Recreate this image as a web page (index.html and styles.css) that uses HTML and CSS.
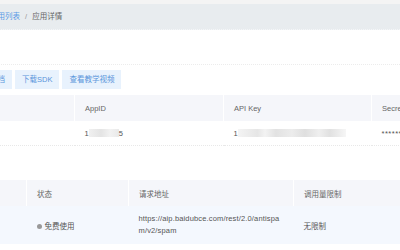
FILE: index.html
```html
<!DOCTYPE html>
<html>
<head>
  <title>应用详情</title>
  <link rel="stylesheet" href="styles.css">
</head>
<body>
  <div class="top-strip"></div>
  <div class="page">
    <div class="crumb">
      <a class="crumb-link" href="#">应用列表</a>
      <span class="crumb-sep">/</span>
      <span class="crumb-current">应用详情</span>
    </div>

    <div class="blank"></div>

    <div class="actions">
      <a class="btn" href="#">技术文档</a>
      <a class="btn" href="#">下载SDK</a>
      <a class="btn" href="#">查看教学视频</a>
    </div>

    <table class="grid keys">
      <tr>
        <th class="c1">应用名称</th>
        <th class="c2">AppID</th>
        <th class="c3">API Key</th>
        <th class="c4">Secret Key</th>
      </tr>
      <tr>
        <td>内容审核</td>
        <td>1<span class="mask mask-short"></span>5</td>
        <td>1<span class="mask mask-long"></span></td>
        <td class="secret">******</td>
      </tr>
    </table>

    <table class="grid apis">
      <tr>
        <th class="d1">API</th>
        <th class="d2">状态</th>
        <th class="d3">请求地址</th>
        <th class="d4">调用量限制</th>
      </tr>
      <tr class="hover">
        <td>反垃圾</td>
        <td class="status"><span class="dot"></span>免费使用</td>
        <td class="url">https://aip.baidubce.com/rest/2.0/antispam/v2/spam</td>
        <td>无限制</td>
      </tr>
    </table>
  </div>
</body>
</html>
```

FILE: styles.css
```css
body {
  margin: 0;
  font-family: "Liberation Sans", "Noto Sans CJK SC", sans-serif;
  font-size: 7.5px;
  color: #333;
  background-color: #fff;
  overflow: hidden;
}

.top-strip {
  height: 4px;
  background-color: #f4f4f4;
}

.page {
  margin-left: -60px;
  width: 700px;
}

.crumb {
  height: 25px;
  line-height: 25px;
  padding-left: 50px;
  background-color: #e8ecef;
  border-bottom: 1px dotted #f4f6f8;
  color: #666;
}

.crumb-link {
  color: #5b9be6;
  text-decoration: none;
}

.crumb-sep {
  margin: 0 3px;
  color: #999;
}

.blank {
  height: 34px;
  border-bottom: 1px dotted #ececec;
}

.actions {
  display: flex;
  gap: 3px;
  padding-left: 28px;
  margin-top: 5px;
}

.btn {
  display: block;
  height: 19px;
  line-height: 19px;
  padding: 0 7px;
  background-color: #e8f2fd;
  color: #5a95db;
  text-decoration: none;
}

.grid {
  border-collapse: collapse;
  table-layout: fixed;
}

.grid th {
  height: 26px;
  padding: 0 10px;
  text-align: left;
  font-weight: normal;
  color: #666;
  background-color: #f5f6fa;
  border-right: 1px solid #fff;
}

.grid td {
  padding: 0 10px;
  color: #555;
}

.keys {
  width: 629px;
  margin-top: 6px;
}

.keys td {
  height: 24px;
  border-bottom: 1px dotted #e8e8e8;
}

.c1 { width: 114px; }
.c2 { width: 128px; }
.c3 { width: 127px; }
.c4 { width: 180px; }

.mask {
  display: inline-block;
  height: 8px;
  vertical-align: -1px;
}

.mask-short {
  width: 30px;
  background: linear-gradient(90deg, #f0f0f0, #e4e4e4 40%, #f2f2f2 70%, #e9e9e9);
}

.mask-long {
  width: 108px;
  background: linear-gradient(90deg, #f4f4f4 0, #e6e6e6 18%, #f3f3f3 25%, #e2e2e2 35%, #ececec 50%, #dfdfdf 62%, #efefef 75%, #e1e1e1 85%, #f6f6f6 100%);
}

.secret {
  letter-spacing: 0.5px;
}

.apis {
  width: 551px;
  margin-top: 34px;
}

.d1 { width: 66px; }
.d2 { width: 81px; }
.d3 { width: 144px; }
.d4 { width: 180px; }

.apis td {
  height: 38px;
  background-color: #f4f8fe;
}

.status {
  color: #999;
}

.dot {
  display: inline-block;
  width: 5px;
  height: 5px;
  margin-right: 3px;
  border-radius: 50%;
  background-color: #999;
}

.url {
  line-height: 12px;
  letter-spacing: 0.15px;
  word-break: break-all;
}
```
